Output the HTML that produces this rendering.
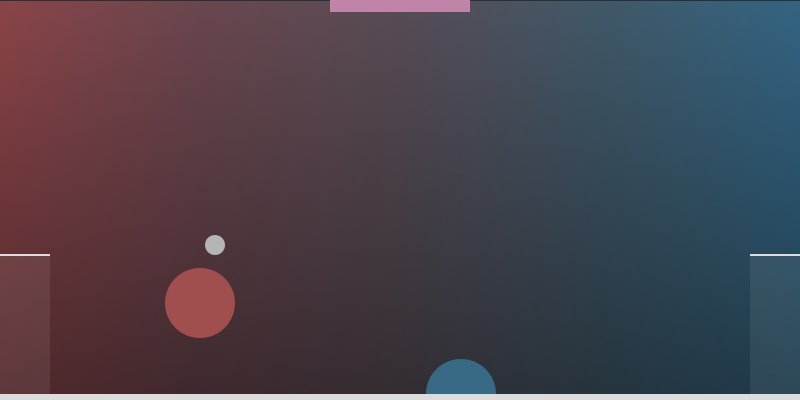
<!DOCTYPE html>
<html><head><style>
html,body{margin:0;padding:0;width:800px;height:400px;overflow:hidden}
body{position:relative;
background:
linear-gradient(to bottom,rgba(0,0,0,0) 0%,rgba(0,0,0,0.42) 100%),
linear-gradient(to right,#8a4448 0%,#6a464e 25%,#574c56 50%,#405868 75%,#336482 100%);}
.a{position:absolute}
</style></head><body>
<div class="a" style="left:0;top:0;width:800px;height:1px;background:#2a2f35"></div>
<div class="a" style="left:330px;top:0;width:140px;height:12px;background:#c084a8"></div>
<div class="a" style="left:0;top:254px;width:50px;height:2px;background:#e0dcdc"></div>
<div class="a" style="left:0;top:256px;width:50px;height:138px;background:rgba(255,255,255,0.08)"></div>
<div class="a" style="left:750px;top:254px;width:50px;height:2px;background:#dcdcdc"></div>
<div class="a" style="left:750px;top:256px;width:50px;height:138px;background:rgba(255,255,255,0.07)"></div>
<div class="a" style="left:205px;top:235px;width:20px;height:20px;border-radius:50%;background:#b5b5b5"></div>
<div class="a" style="left:165px;top:268px;width:70px;height:70px;border-radius:50%;background:#a04e4e"></div>
<div class="a" style="left:426px;top:359px;width:70px;height:35px;overflow:hidden"><div style="width:70px;height:70px;border-radius:50%;background:#386a86"></div></div>
<div class="a" style="left:0;top:394px;width:800px;height:6px;background:#dcdcdc"></div>
</body></html>
